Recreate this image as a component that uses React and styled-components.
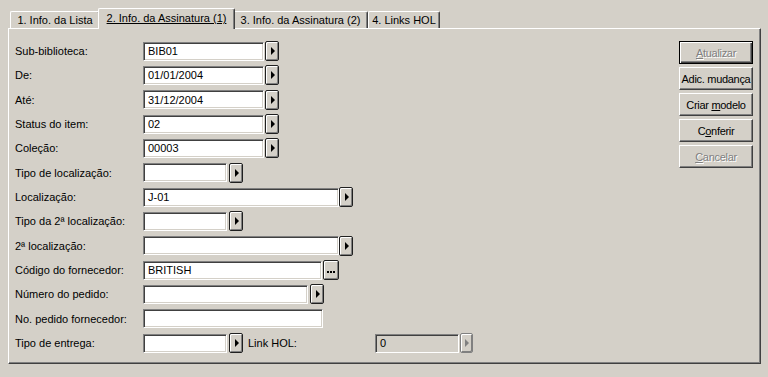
import React from 'react';
import styled, { createGlobalStyle } from 'styled-components';

const Global = createGlobalStyle`
  body {
    margin: 0;
    background: #d4d0c8;
    font-family: "Liberation Sans", Arial, sans-serif;
    font-size: 11px;
    color: #000;
  }
`;

const Window = styled.div`
  width: 768px;
  height: 377px;
  padding: 8px 0 0 8px;
  box-sizing: border-box;
  background: #d4d0c8;
`;

const TabStrip = styled.div`
  display: flex;
  align-items: flex-end;
  height: 20px;
  padding-left: 2px;
`;

const Tab = styled.div`
  position: relative;
  z-index: ${p => (p.$active ? 1 : 0)};
  width: ${p => p.$w}px;
  height: ${p => (p.$active ? '21px' : '17px')};
  margin: 0 ${p => (p.$active ? '-2px' : '0')} ${p => (p.$active ? '-1px' : '0')};
  padding-bottom: ${p => (p.$active ? '2px' : '0')};
  box-sizing: border-box;
  display: flex;
  align-items: center;
  justify-content: center;
  background: #d4d0c8;
  border-top: 1px solid #fff;
  border-left: 1px solid #fff;
  border-right: 1px solid #404040;
  box-shadow: inset -1px 0 #808080;
  border-radius: 2px 2px 0 0;
  white-space: nowrap;
  text-decoration: ${p => (p.$active ? 'underline' : 'none')};
`;

const Panel = styled.div`
  width: 753px;
  height: 336px;
  box-sizing: border-box;
  display: flex;
  padding: 10px 7px 0 6px;
  border-top: 1px solid #fff;
  border-left: 1px solid #fff;
  border-right: 1px solid #404040;
  border-bottom: 1px solid #404040;
  box-shadow: inset -1px -1px #808080;
`;

const Form = styled.div`
  flex: 1;
  display: flex;
  flex-direction: column;
`;

const Row = styled.div`
  display: flex;
  align-items: center;
  height: 24.333px;
`;

const Label = styled.span`
  width: ${p => p.$w || 128}px;
  flex-shrink: 0;
  white-space: nowrap;
  margin-left: ${p => p.$gap || 0}px;
`;

const Field = styled.div`
  width: ${p => p.$w}px;
  height: 19px;
  box-sizing: border-box;
  display: flex;
  align-items: center;
  padding-left: 4px;
  background: ${p => (p.$disabled ? '#d4d0c8' : '#fff')};
  border-top: 1px solid #808080;
  border-left: 1px solid #808080;
  border-bottom: 1px solid #fff;
  border-right: 1px solid #fff;
  box-shadow: inset 1px 1px #404040, inset -1px -1px #d4d0c8;
  white-space: nowrap;
`;

const PickButton = styled.div`
  width: ${p => p.$w || 14}px;
  height: 20px;
  margin-left: ${p => (p.$gap === undefined ? 1 : p.$gap)}px;
  box-sizing: border-box;
  display: flex;
  align-items: center;
  justify-content: center;
  background: #d4d0c8;
  border: 1px solid ${p => (p.$disabled ? '#808080' : '#202020')};
  box-shadow: inset 1px 1px #fff, inset -1px -1px #808080;
  border-radius: 2px;
  flex-shrink: 0;
`;

const Arrow = styled.span`
  width: 0;
  height: 0;
  margin-left: 1px;
  border-top: 4px solid transparent;
  border-bottom: 4px solid transparent;
  border-left: 4px solid ${p => (p.$disabled ? '#808080' : '#000')};
`;

const Dots = styled.span`
  display: flex;
  gap: 1px;
  margin-top: 3px;
`;

const Dot = styled.span`
  width: 2px;
  height: 2px;
  background: #000;
`;

const Side = styled.div`
  width: 74px;
  margin-top: 2px;
  display: flex;
  flex-direction: column;
  gap: 3px;
`;

const PushButton = styled.div`
  height: 23px;
  box-sizing: border-box;
  display: flex;
  align-items: center;
  justify-content: center;
  white-space: nowrap;
  letter-spacing: -0.3px;
  background: #d4d0c8;
  border: 1px solid ${p => (p.$default ? '#000' : '#fff')};
  border-right-color: ${p => (p.$default ? '#000' : '#404040')};
  border-bottom-color: ${p => (p.$default ? '#000' : '#404040')};
  box-shadow: ${p =>
    p.$default
      ? 'inset 1px 1px #fff, inset -1px -1px #404040, inset -2px -2px #808080'
      : 'inset -1px -1px #808080'};
  color: ${p => (p.$disabled ? '#808080' : '#000')};
  text-shadow: ${p => (p.$disabled ? '1px 1px #fff' : 'none')};
`;

const Pick = ({ disabled, gap, w }) => (
  <PickButton $disabled={disabled} $gap={gap} $w={w}>
    <Arrow $disabled={disabled} />
  </PickButton>
);

const rows = [
  { label: 'Sub-biblioteca:', w: 121, value: 'BIB01' },
  { label: 'De:', w: 121, value: '01/01/2004' },
  { label: 'Até:', w: 121, value: '31/12/2004' },
  { label: 'Status do item:', w: 121, value: '02' },
  { label: 'Coleção:', w: 121, value: '00003' },
  { label: 'Tipo de localização:', w: 84, value: '', gap: 2 },
  { label: 'Localização:', w: 196, value: 'J-01', gap: 0 },
  { label: 'Tipo da 2ª localização:', w: 84, value: '', gap: 2 },
  { label: '2ª localização:', w: 196, value: '', gap: 0 },
];

export default function App() {
  return (
    <Window>
      <Global />
      <TabStrip>
        <Tab $w={90}>1. Info. da Lista</Tab>
        <Tab $w={137} $active>2. Info. da Assinatura (1)</Tab>
        <Tab $w={135}>3. Info. da Assinatura (2)</Tab>
        <Tab $w={72}>4. Links HOL</Tab>
      </TabStrip>
      <Panel>
        <Form>
          {rows.map(r => (
            <Row key={r.label}>
              <Label>{r.label}</Label>
              <Field $w={r.w}>{r.value}</Field>
              <Pick gap={r.gap} />
            </Row>
          ))}
          <Row>
            <Label>Código do fornecedor:</Label>
            <Field $w={179}>BRITISH</Field>
            <PickButton $w={16}>
              <Dots><Dot /><Dot /><Dot /></Dots>
            </PickButton>
          </Row>
          <Row>
            <Label>Número do pedido:</Label>
            <Field $w={165} />
            <Pick gap={2} />
          </Row>
          <Row>
            <Label>No. pedido fornecedor:</Label>
            <Field $w={180} />
          </Row>
          <Row>
            <Label>Tipo de entrega:</Label>
            <Field $w={84} />
            <Pick gap={2} />
            <Label $w={127} $gap={5}>Link HOL:</Label>
            <Field $w={84} $disabled>0</Field>
            <Pick disabled gap={1} w={13} />
          </Row>
        </Form>
        <Side>
          <PushButton $default $disabled><span><u>A</u>tualizar</span></PushButton>
          <PushButton>Adic. mudança</PushButton>
          <PushButton><span>Criar <u>m</u>odelo</span></PushButton>
          <PushButton><span>C<u>o</u>nferir</span></PushButton>
          <PushButton $disabled><span><u>C</u>ancelar</span></PushButton>
        </Side>
      </Panel>
    </Window>
  );
}
